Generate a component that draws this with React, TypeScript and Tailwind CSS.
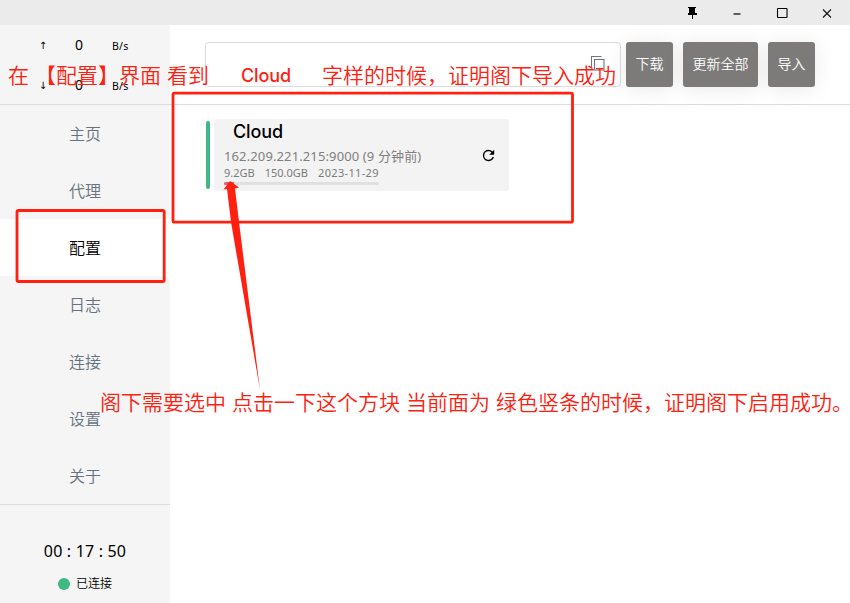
import type { ReactNode } from "react";

const NAV = ["主页", "代理", "配置", "日志", "连接", "设置", "关于"];

const NOTES = [
  { text: "在", pos: "left-[8px] top-[63px]" },
  { text: "【配置】界面", pos: "left-[35px] top-[63px]" },
  { text: "看到", pos: "left-[167px] top-[63px]" },
  { text: "字样的时候，证明阁下导入成功", pos: "left-[322px] top-[63px]" },
  { text: "阁下需要选中", pos: "left-[100px] top-[390px]" },
  { text: "点击一下这个方块", pos: "left-[232px] top-[390px]" },
  { text: "当前面为", pos: "left-[406px] top-[390px]" },
  { text: "绿色竖条的时候，证明阁下启用成功。", pos: "left-[496px] top-[390px]" },
];

function TitleBar() {
  return (
    <header className="flex h-[25px] shrink-0 items-center justify-end bg-[#ebebeb] pr-px">
      <div className="flex w-[45px] justify-center">
        <svg width="10" height="12" viewBox="0 0 10 12" shapeRendering="crispEdges">
          <path d="M1 0h8v1H8v5h1.500v1.500H5.500V12h-1V7.500H.5V6H2V1H1z" fill="#000" />
        </svg>
      </div>
      <div className="flex w-[45px] justify-center">
        <svg width="8" height="12" viewBox="0 0 8 12">
          <path d="M.5 7h7" stroke="#000" strokeWidth="1.200" />
        </svg>
      </div>
      <div className="flex w-[45px] justify-center">
        <svg width="12" height="12" viewBox="0 0 12 12">
          <rect x="1.500" y="1.500" width="9.500" height="9" rx=".5" fill="none" stroke="#000" strokeWidth="1.100" />
        </svg>
      </div>
      <div className="flex w-[45px] justify-center">
        <svg width="10" height="10" viewBox="0 0 10 10">
          <path d="M1 1.500l8 8M9 1.500l-8 8" stroke="#111" strokeWidth="1.100" />
        </svg>
      </div>
    </header>
  );
}

function Traffic({ arrow }: { arrow: string }) {
  return (
    <div className="flex h-10 items-center text-black">
      <span className="ml-[37px] w-[12px] pt-px text-center font-['DejaVu_Sans',sans-serif] text-[10px]">{arrow}</span>
      <span className="ml-[20px] w-5 pb-px text-center text-[14px]">0</span>
      <span className="ml-[23px] pt-[3px] text-[10.500px] tracking-[0.2px]">B/s</span>
    </div>
  );
}

function Sidebar() {
  return (
    <aside className="flex w-[170px] shrink-0 flex-col bg-white">
      <div className="h-[80px] border-b border-[#dcdcdc] bg-[#f5f5f5]">
        <Traffic arrow="↑" />
        <Traffic arrow="↓" />
      </div>
      <nav className="flex flex-col">
        {NAV.map((label, i) => (
          <div
            key={label}
            className={`flex h-[57px] items-center justify-center text-[16px] font-[350] ${
              i === 2 ? "bg-white text-black" : "bg-[#f5f5f5] text-[#66727f]"
            } ${i === 1 ? "rounded-br-[6px]" : ""} ${i === 3 ? "rounded-tr-[6px]" : ""}`}
          >
            {label}
          </div>
        ))}
      </nav>
      <div className="flex flex-1 flex-col items-center border-t border-[#dcdcdc] bg-[#f5f5f5] pt-[34px] text-black">
        <div className="text-[16px] leading-6 tracking-[0.18px] whitespace-pre">00 : 17 : 50</div>
        <div className="mt-[10px] flex items-center gap-[6px] text-[12px] leading-5 font-[350]">
          <span className="size-3 rounded-full bg-[#41b883]" />
          <span className="pt-px">已连接</span>
        </div>
      </div>
    </aside>
  );
}

function Button({ children, width }: { children: ReactNode; width: string }) {
  return (
    <button
      className={`${width} h-[45px] shrink-0 rounded-[3px] bg-[#7d7b79] pb-[2px] text-[14px] font-[350] whitespace-nowrap text-white shadow-[0_2px_20px_rgba(0,0,0,0.09)]`}
    >
      {children}
    </button>
  );
}

function ProfileCard() {
  return (
    <div className="ml-[36px] mt-[14px] flex items-center gap-1">
      <div className="h-[68px] w-1 rounded-[2px] bg-[#41b883]" />
      <div className="flex h-[72px] w-[295px] items-center justify-between rounded-[3px] bg-[#f3f3f3] pl-[10px] pr-[12px]">
        <div className="flex h-full flex-col">
          <div className="ml-[9px] mt-[2px] font-['Inter',sans-serif] text-[18px] leading-[22px] font-medium tracking-[-0.1px] text-black">Cloud</div>
          <div className="mt-[4px] w-[200px] text-[13px] leading-[18px] tracking-[0.12px] whitespace-nowrap text-[#7f7f7f]">
            162.209.221.215:9000 (9 分钟前)
          </div>
          <div className="flex gap-[10px] text-[11px] leading-[16px] whitespace-nowrap text-[#7b7b7b]">
            <span>9.2GB</span>
            <span>150.0GB</span>
            <span className="tracking-[0.35px]">2023-11-29</span>
          </div>
          <div className="mt-px h-[3px] w-[155px] overflow-hidden rounded-[2px] bg-[#e0e0e0]">
            <div className="h-full w-[10px] bg-[#ef5a74]" />
          </div>
        </div>
        <svg width="17" height="17" viewBox="0 0 24 24">
          <path
            d="M17.650 6.350A7.960 7.960 0 0 0 12 4a8 8 0 1 0 7.730 10h-2.080A6 6 0 1 1 12 6c1.660 0 3.140.69 4.220 1.780L13 11h7V4z"
            fill="#000"
          />
        </svg>
      </div>
    </div>
  );
}

function Annotations() {
  return (
    <div className="pointer-events-none absolute inset-0 text-[#ff2010]">
      <svg className="absolute inset-0" width="850" height="603" viewBox="0 0 850 603">
        <g fill="none" stroke="#ff2010" strokeWidth="2.800">
          <rect x="173" y="93.200" width="399.500" height="129" rx="1.500" />
          <rect x="17" y="210.500" width="147.200" height="71" rx="1.500" />
        </g>
        <path d="M230 181L223.500 189.500L227 189L231 222L260 390L239 222L235 188.500L239 187.500Z" fill="#ff2010" />
      </svg>
      {NOTES.map(({ text, pos }) => (
        <span key={text} className={`absolute ${pos} text-[21px] leading-6 font-[350] whitespace-nowrap`}>
          {text}
        </span>
      ))}
      <span className="absolute left-[241px] top-[64px] font-['Inter',sans-serif] text-[18px] leading-6 font-medium tracking-[-0.1px]">Cloud</span>
    </div>
  );
}

export default function App() {
  return (
    <div className="relative flex h-[603px] w-[850px] flex-col overflow-hidden bg-white font-['Noto_Sans','Noto_Sans_CJK_SC',sans-serif]">
      <TitleBar />
      <div className="flex flex-1">
        <Sidebar />
        <main className="flex-1">
          <div className="flex h-[80px] items-center border-b border-[#dcdcdc] pl-[35px]">
            <div className="mr-[5px] flex h-[45px] w-[416px] items-center justify-end rounded-[4px] border border-[#dcdcdc] pr-[14px] pb-[3px]">
              <svg width="16" height="16" viewBox="0 0 16 16" fill="none" stroke="#6b7785" strokeWidth="1.100">
                <path d="M1.500 12V1.500H11.500" />
                <rect x="4.500" y="4.500" width="9.500" height="10.500" />
              </svg>
            </div>
            <div className="flex gap-[10px]">
              <Button width="w-[47px]">下载</Button>
              <Button width="w-[75px]">更新全部</Button>
              <Button width="w-[47px]">导入</Button>
            </div>
          </div>
          <ProfileCard />
        </main>
      </div>
      <Annotations />
    </div>
  );
}
